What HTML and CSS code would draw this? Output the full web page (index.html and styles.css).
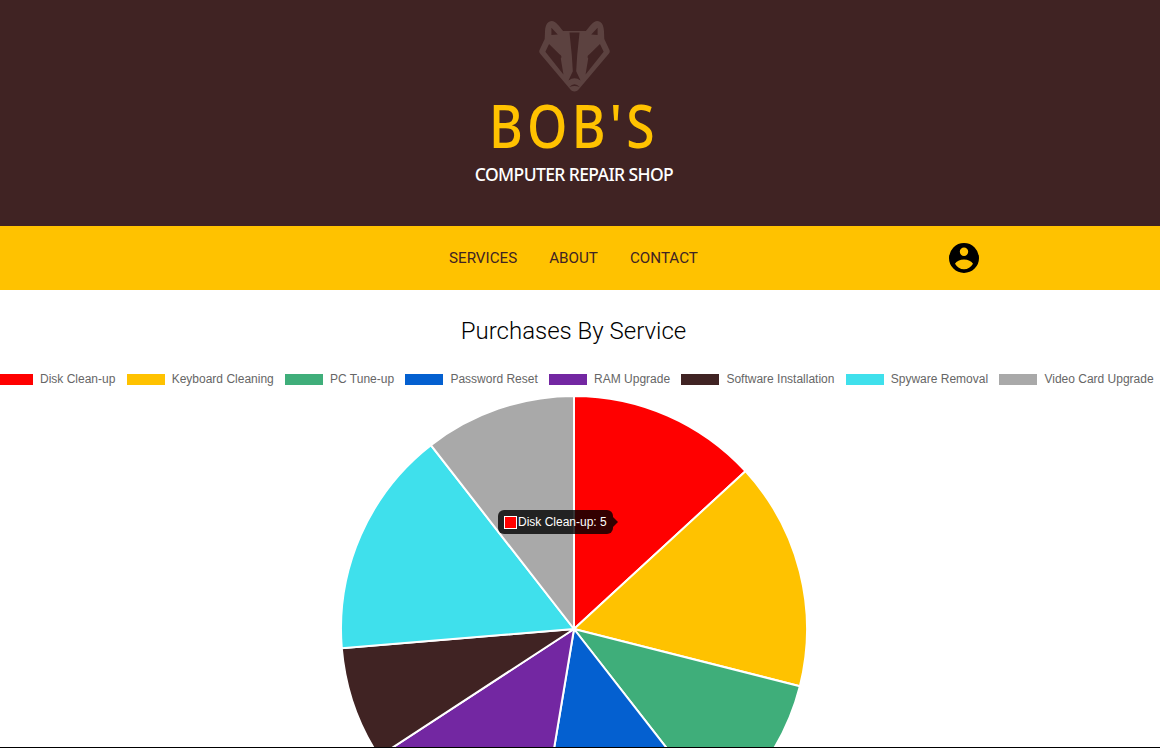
FILE: index.html
```html
<!DOCTYPE html>
<html lang="en">
<head>
    <meta charset="UTF-8">
    <meta name="viewport" content="width=device-width, initial-scale=1.0">
    <title>Bob's Computer Repair Shop</title>
    <link rel="stylesheet" href="styles.css">
</head>
<body>
    <header class="banner">
        <svg class="logo" viewBox="28 18 212 212" aria-hidden="true">
            <path class="logo-fill" fill-rule="evenodd" d="M45 72 L46 48 C47 28 55 18 66 18 C78 18 90 36 100 48 L168 48 C178 36 190 18 202 18 C213 18 221 28 222 48 L223 72 L238 104 Q241 110 237 115 L150 218 C140 232 128 232 118 218 L31 115 Q27 110 30 104 Z M65 60 L65 38 L84 58 Z M203 60 L203 38 L184 58 Z M58 87 L90 118 Q98 122 93 130 L101 178 L47 110 Z M210 87 L178 118 Q170 122 175 130 L167 178 L221 110 Z M119 52 L149 52 L142 120 L139 168 L152 196 Q134 182 116 196 L129 168 L126 120 Z M118 216 Q134 198 150 216 Q134 208 118 216 Z"/>
        </svg>
        <h1 class="brand">BOB'S</h1>
        <p class="tagline">COMPUTER REPAIR SHOP</p>
    </header>

    <nav class="navbar">
        <a href="#">SERVICES</a>
        <a href="#">ABOUT</a>
        <a href="#">CONTACT</a>
        <svg class="user-icon" viewBox="0 0 30 30" aria-hidden="true">
            <path fill-rule="evenodd" d="M15 0 A15 15 0 1 0 15 30 A15 15 0 1 0 15 0 Z M15 4.6 A4.2 4.2 0 1 1 15 13 A4.2 4.2 0 1 1 15 4.6 Z M15 16.4 C19 16.4 22.6 18 24 20.8 C22 24.3 18.8 26.3 15 26.3 C11.2 26.3 8 24.3 6 20.8 C7.4 18 11 16.4 15 16.4 Z"/>
        </svg>
    </nav>

    <main class="chart">
        <h2 class="chart-title">Purchases By Service</h2>
        <ul class="legend">
            <li><span class="swatch red"></span>Disk Clean-up</li>
            <li><span class="swatch amber"></span>Keyboard Cleaning</li>
            <li><span class="swatch green"></span>PC Tune-up</li>
            <li><span class="swatch blue"></span>Password Reset</li>
            <li><span class="swatch purple"></span>RAM Upgrade</li>
            <li><span class="swatch brown"></span>Software Installation</li>
            <li><span class="swatch cyan"></span>Spyware Removal</li>
            <li><span class="swatch gray"></span>Video Card Upgrade</li>
        </ul>
        <div class="pie-wrap">
            <svg class="pie" id="pie" width="468" height="468" viewBox="-234 -234 468 468" aria-hidden="true"></svg>
            <div class="tooltip"><span class="tooltip-key"></span>Disk Clean-up: 5</div>
        </div>
    </main>

    <script type="text/javascript">
        const slices = [
            [5, '#ff0000'], [6, '#ffc200'], [4, '#3fae7a'], [5, '#0460d0'],
            [5, '#7327a2'], [3, '#402323'], [6, '#3fe0ec'], [4, '#a9a9a9']
        ];
        const total = slices.reduce((sum, s) => sum + s[0], 0);
        const radius = 233;
        const pie = document.getElementById('pie');
        let start = 0;

        slices.forEach(([value, color]) => {
            const end = start + value / total * Math.PI * 2;
            const x1 = radius * Math.sin(start), y1 = -radius * Math.cos(start);
            const x2 = radius * Math.sin(end), y2 = -radius * Math.cos(end);
            const path = document.createElementNS('http://www.w3.org/2000/svg', 'path');
            path.setAttribute('d', `M0 0 L${x1} ${y1} A${radius} ${radius} 0 0 1 ${x2} ${y2} Z`);
            path.setAttribute('fill', color);
            path.setAttribute('stroke', '#fff');
            path.setAttribute('stroke-width', '2');
            pie.appendChild(path);
            start = end;
        });
    </script>
</body>
</html>
```

FILE: styles.css
```css
* {
    box-sizing: border-box;
}
html, body {
    height: 100%;
}
body {
    margin: 0;
    overflow: hidden;
    background: #fff;
    font-family: "Liberation Sans", sans-serif;
}
.banner {
    height: 226px;
    padding: 21px 12px 0 0;
    background-color: #402323;
    text-align: center;
}
.logo {
    display: block;
    width: 71px;
    height: 71px;
    margin: 0 auto;
}
.logo-fill {
    fill: #5c4240;
}
.brand {
    margin: 1px 0 0;
    color: #ffc200;
    font-family: "Noto Sans", sans-serif;
    font-size: 60px;
    font-weight: 500;
    line-height: 64px;
    letter-spacing: 5px;
    transform: scaleX(0.86);
}
.tagline {
    margin: 5px 0 0;
    color: #fff;
    font-family: "Noto Sans", sans-serif;
    font-size: 17.5px;
    font-weight: 500;
    line-height: 24px;
    letter-spacing: -0.6px;
}
.navbar {
    display: flex;
    align-items: center;
    height: 64px;
    padding: 0 0 1px 449px;
    gap: 32px;
    background-color: #ffc200;
}
.navbar a {
    color: #402323;
    font-family: Roboto, sans-serif;
    font-size: 15.2px;
    text-decoration: none;
}
.user-icon {
    width: 30px;
    height: 30px;
    margin-left: 219px;
}
.chart {
    height: 458px;
    overflow: hidden;
    border-bottom: 1px solid #000;
    padding-top: 25px;
}
.chart-title {
    margin: 0;
    padding-right: 13px;
    color: #000;
    font-family: Roboto, sans-serif;
    font-size: 24px;
    font-weight: 300;
    line-height: 32px;
    text-align: center;
}
.legend {
    display: flex;
    gap: 11.3px;
    margin: 25px 0 0;
    padding: 0;
    color: #666;
    font-size: 12px;
    line-height: 14px;
    list-style: none;
}
.legend li {
    display: flex;
    align-items: center;
    white-space: nowrap;
}
.swatch {
    width: 38px;
    height: 11px;
    margin-right: 7px;
}
.swatch.red { background: #ff0000; margin-left: -5px; }
.swatch.amber { background: #ffc200; }
.swatch.green { background: #3fae7a; }
.swatch.blue { background: #0460d0; }
.swatch.purple { background: #7327a2; }
.swatch.brown { background: #402323; }
.swatch.cyan { background: #3fe0ec; }
.swatch.gray { background: #a9a9a9; }
.pie-wrap {
    position: relative;
    width: 468px;
    margin: 9px 0 0 339.5px;
}
.pie {
    display: block;
}
.tooltip {
    position: absolute;
    top: 115px;
    left: 158.5px;
    display: flex;
    align-items: center;
    height: 24px;
    padding: 0 6px;
    border-radius: 6px;
    background: rgba(0, 0, 0, 0.8);
    color: #fff;
    font-size: 12px;
    white-space: nowrap;
}
.tooltip::after {
    content: "";
    position: absolute;
    top: 7px;
    right: -5px;
    border-top: 5px solid transparent;
    border-bottom: 5px solid transparent;
    border-left: 5px solid rgba(0, 0, 0, 0.8);
}
.tooltip-key {
    width: 13px;
    height: 13px;
    margin-right: 1px;
    border: 1px solid #fff;
    background: #ff0000;
}
```
